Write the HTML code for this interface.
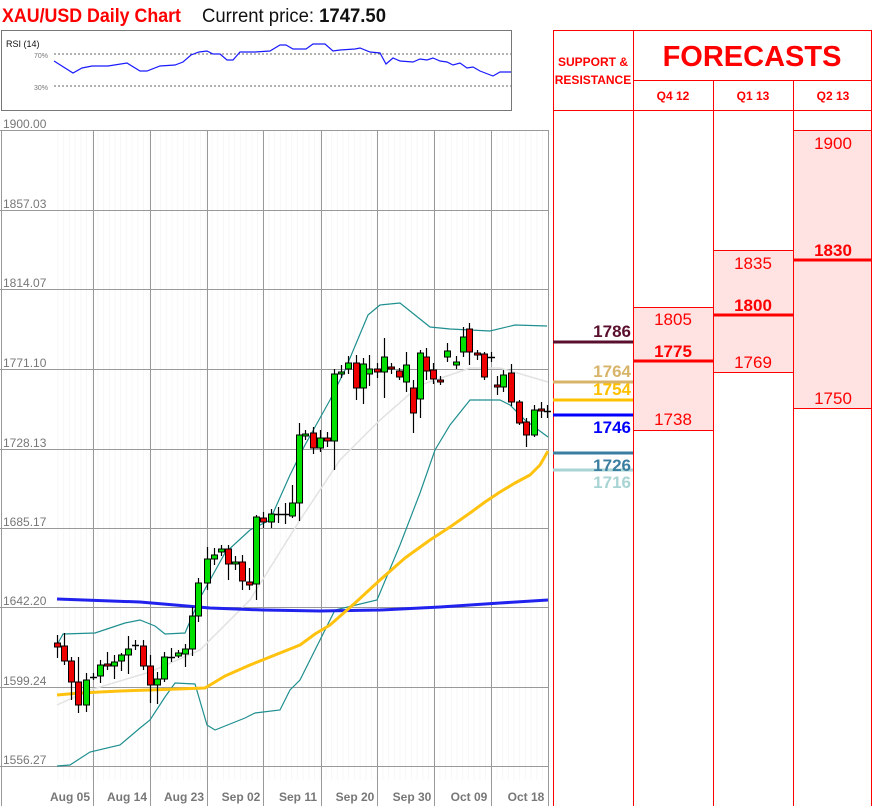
<!DOCTYPE html>
<html><head><meta charset="utf-8"><style>
html,body{margin:0;padding:0;background:#fff;width:873px;height:806px;overflow:hidden}
svg{display:block;font-family:"Liberation Sans",sans-serif}
</style></head><body>
<svg id="s" width="873" height="806" viewBox="0 0 873 806" xmlns="http://www.w3.org/2000/svg">
<text x="2" y="22" font-size="19" font-weight="bold" fill="#ff0000" textLength="179" lengthAdjust="spacingAndGlyphs">XAU/USD Daily Chart</text>
<text x="202" y="22" font-size="19" fill="#111" textLength="184" lengthAdjust="spacingAndGlyphs">Current price: <tspan font-weight="bold">1747.50</tspan></text>
<!-- RSI box -->
<rect x="1.5" y="30.5" width="510" height="80" fill="#fff" stroke="#777"/>
<text x="6" y="47" font-size="9" fill="#111">RSI (14)</text>
<line x1="54" y1="54" x2="511" y2="54" stroke="#666" stroke-dasharray="2,2"/>
<line x1="54" y1="86" x2="511" y2="86" stroke="#666" stroke-dasharray="2,2"/>
<text x="34" y="58" font-size="7" fill="#777">70%</text>
<text x="34" y="90" font-size="7" fill="#777">30%</text>
<polyline fill="none" stroke="#1a1aff" stroke-width="1.2" points="54,61 73,73 82,68 92,66 108,66 127,63 140,71 147,71 160,66 175,65 183,62 191,55 199,52 207,51 213,54 220,54 227,60 233,60 240,52 255,52 270,51 280,45 286,45 293,49 306,49 313,44 325,44 333,51 340,50 355,49 360,48 370,52 380,53 386,64 393,58 400,61 413,62 420,59 427,60 433,58 440,61 447,62 453,65 460,63 467,68 473,67 480,71 493,76 500,72 511,72"/>
<g id="grid"></g>
<g id="lines">
<polyline fill="none" stroke="#e2e2e2" stroke-width="1.5" points="57,705 90,690 150,672 200,650 250,600 300,520 340,460 380,420 420,385 450,375 470,368 500,368 548,382"/>
<polyline fill="none" stroke="#1f8f8f" stroke-width="1.2" points="57,645 63,634 95,633 125,623 140,620 155,626 165,634 185,633 200,598 210,580 225,553 250,530 270,520 290,475 305,445 330,400 345,370 368,315 380,305 400,303 430,327 450,329 490,331 515,325 547,326"/>
<polyline fill="none" stroke="#1f8f8f" stroke-width="1.2" points="57,766 70,765 90,752 120,745 140,728 150,720 165,697 175,683 195,684 207,725 215,730 245,718 255,713 280,710 290,690 300,680 320,640 335,610 377,600 400,545 420,493 435,450 450,425 470,400 500,400 510,405 525,420 548,437"/>
<polyline fill="none" stroke="#2222ee" stroke-width="3" points="57,599 140,602 210,608 263,610 320,611 380,610 440,607 500,603 548,600"/>
<polyline fill="none" stroke="#ffc20e" stroke-width="3" stroke-linejoin="round" points="57,695 80,693 120,691 150,690 205,688 225,676 250,665 275,655 300,645 315,634 330,625 355,603 380,580 405,558 430,540 450,527 470,513 485,502 500,492 515,483 530,475 540,465 548,451"/>
</g>
<g id="candles"></g>
<g font-size="12" fill="#777" font-weight="bold" text-anchor="middle">
<text x="70" y="801">Aug 05</text><text x="127" y="801">Aug 14</text><text x="184" y="801">Aug 23</text><text x="241" y="801">Sep 02</text><text x="298" y="801">Sep 11</text><text x="355" y="801">Sep 20</text><text x="412" y="801">Sep 30</text><text x="469" y="801">Oct 09</text><text x="526" y="801">Oct 18</text>
</g>
<g font-size="12" fill="#777">
<text x="3" y="128">1900.00</text><text x="3" y="208">1857.03</text><text x="3" y="287">1814.07</text><text x="3" y="367">1771.10</text><text x="3" y="447">1728.13</text><text x="3" y="526">1685.17</text><text x="3" y="605">1642.20</text><text x="3" y="685">1599.24</text><text x="3" y="764">1556.27</text>
</g>
<!-- table -->
<g fill="#ffe3e3">
<rect x="633" y="307" width="80" height="124"/>
<rect x="713" y="250" width="80" height="122"/>
<rect x="793" y="130" width="79" height="278"/>
</g>
<g stroke="#ff0000" stroke-width="1" fill="none">
<rect x="553.5" y="30.5" width="318" height="776"/>
<line x1="633.5" y1="30" x2="633.5" y2="806"/>
<line x1="713.5" y1="80" x2="713.5" y2="806"/>
<line x1="793.5" y1="80" x2="793.5" y2="806"/>
<line x1="633" y1="80.5" x2="872" y2="80.5"/>
<line x1="553" y1="110.5" x2="872" y2="110.5"/>
<line x1="633" y1="307.5" x2="713" y2="307.5"/><line x1="633" y1="430.5" x2="713" y2="430.5"/>
<line x1="713" y1="250.5" x2="793" y2="250.5"/><line x1="713" y1="372.5" x2="793" y2="372.5"/>
<line x1="793" y1="130.5" x2="872" y2="130.5"/><line x1="793" y1="408.5" x2="872" y2="408.5"/>
</g>
<g stroke="#ff0000" stroke-width="3">
<line x1="633" y1="361" x2="713" y2="361"/><line x1="713" y1="315" x2="793" y2="315"/><line x1="793" y1="260" x2="872" y2="260"/>
</g>
<text x="593" y="66" font-size="12" font-weight="bold" fill="#ff0000" text-anchor="middle">SUPPORT &amp;</text>
<text x="593" y="84" font-size="12" font-weight="bold" fill="#ff0000" text-anchor="middle">RESISTANCE</text>
<text x="752" y="66" font-size="29" font-weight="bold" fill="#ff0000" text-anchor="middle">FORECASTS</text>
<g font-size="12" font-weight="bold" fill="#ff0000" text-anchor="middle">
<text x="673" y="100">Q4 12</text><text x="753" y="100">Q1 13</text><text x="833" y="100">Q2 13</text>
</g>
<g font-size="17" fill="#ff0000" text-anchor="middle">
<text x="673" y="325">1805</text><text x="673" y="357" font-weight="bold">1775</text><text x="673" y="425">1738</text>
<text x="753" y="269">1835</text><text x="753" y="311" font-weight="bold">1800</text><text x="753" y="368">1769</text>
<text x="833" y="149">1900</text><text x="833" y="256" font-weight="bold">1830</text><text x="833" y="404">1750</text>
</g>
<g stroke-width="3">
<line x1="553" y1="342" x2="633" y2="342" stroke="#5a0f2e"/>
<line x1="553" y1="382" x2="633" y2="382" stroke="#d8b46a"/>
<line x1="553" y1="400" x2="633" y2="400" stroke="#ffc000"/>
<line x1="553" y1="415" x2="633" y2="415" stroke="#0000ff"/>
<line x1="553" y1="453" x2="633" y2="453" stroke="#3a7ea0"/>
<line x1="553" y1="470" x2="633" y2="470" stroke="#a8d4d4"/>
</g>
<g font-size="17" font-weight="bold" text-anchor="end">
<text x="631" y="337" fill="#5a0f2e">1786</text>
<text x="631" y="377" fill="#d8b46a">1764</text>
<text x="631" y="395" fill="#ffc000">1754</text>
<text x="631" y="433" fill="#0000ff">1746</text>
<text x="631" y="471" fill="#3a7ea0">1726</text>
<text x="631" y="488" fill="#a8d4d4">1716</text>
</g>
</svg>
<script>
var NS="http://www.w3.org/2000/svg";
function el(p,t,a){var e=document.createElementNS(NS,t);for(var k in a)e.setAttribute(k,a[k]);p.appendChild(e);return e;}
var g=document.getElementById("grid");
for(var x=58;x<548;x+=5.7)el(g,"line",{x1:x,y1:130,x2:x,y2:780,stroke:"#f7f7f7","stroke-width":1});
[130,210,289,369,449,528,607,687,766].forEach(function(y){el(g,"line",{x1:0,y1:y+.5,x2:548,y2:y+.5,stroke:"#999"});});
[93,150,207,263,321,377,434,491,548].forEach(function(x){el(g,"line",{x1:x+.5,y1:130,x2:x+.5,y2:806,stroke:"#999"});});
el(g,"line",{x1:1.5,y1:130,x2:1.5,y2:806,stroke:"#999"});
var C=[[57,643,647,635,658],[64,646,661,633,665],[71,661,682,657,700],[78,682,705,657,713],[86,705,680,673,712],[93,677,677,673,680],[100,676,665,660,683],[107,664,666,652,670],[114,666,662,655,679],[121,661,655,653,671],[128,655,649,636,674],[135,645,645,640,650],[143,646,666,640,670],[150,666,685,655,703],[157,685,679,672,704],[164,679,657,652,682],[171,657,657,648,662],[178,656,653,650,658],[185,654,649,644,667],[192,649,616,607,656],[198,616,583,578,622],[207,583,559,547,590],[214,559,555,548,565],[221,552,549,545,556],[228,549,564,545,580],[235,564,562,556,570],[242,562,581,555,590],[249,582,585,568,590],[256,584,517,515,600],[263,518,522,512,528],[271,522,514,509,528],[278,514,514,507,523],[285,514,514,503,524],[292,516,503,485,518],[299,503,435,423,521],[305,436,434,430,440],[313,433,448,427,454],[320,448,438,430,452],[327,438,441,432,447],[334,441,374,369,470],[341,374,372,365,378],[348,369,363,356,374],[356,363,388,355,400],[363,388,364,358,404],[369,374,369,355,386],[377,369,372,363,378],[384,372,357,338,398],[391,367,369,363,374],[399,371,377,368,380],[406,382,365,352,392],[413,388,413,380,433],[420,399,353,350,418],[426,357,371,348,380],[433,370,379,363,384],[440,380,382,376,385],[447,357,351,343,362],[456,365,362,356,369],[463,352,337,327,357],[469,329,352,323,365],[477,353,355,350,360],[484,354,377,352,380],[491,357,357,352,362],[497,385,387,376,395],[503,387,375,370,392],[511,373,402,364,406],[519,402,423,400,425],[526,422,435,418,447],[534,435,410,405,437],[541,409,411,402,418],[547,411,411,405,418]];
var cg=document.getElementById("candles");
C.forEach(function(c){var x=c[0],o=c[1],cl=c[2];
el(cg,"line",{x1:x+.5,y1:c[3],x2:x+.5,y2:c[4],stroke:"#000","stroke-width":1.2});
var top=Math.min(o,cl),h=Math.abs(o-cl);
if(h<1){el(cg,"line",{x1:x-3,y1:top+.5,x2:x+4,y2:top+.5,stroke:"#000","stroke-width":1.5});}
else el(cg,"rect",{x:x-2.5,y:top,width:6,height:h,fill:cl<o?"#00e000":"#ee0000",stroke:"#000","stroke-width":1});
});
</script>
</body></html>
